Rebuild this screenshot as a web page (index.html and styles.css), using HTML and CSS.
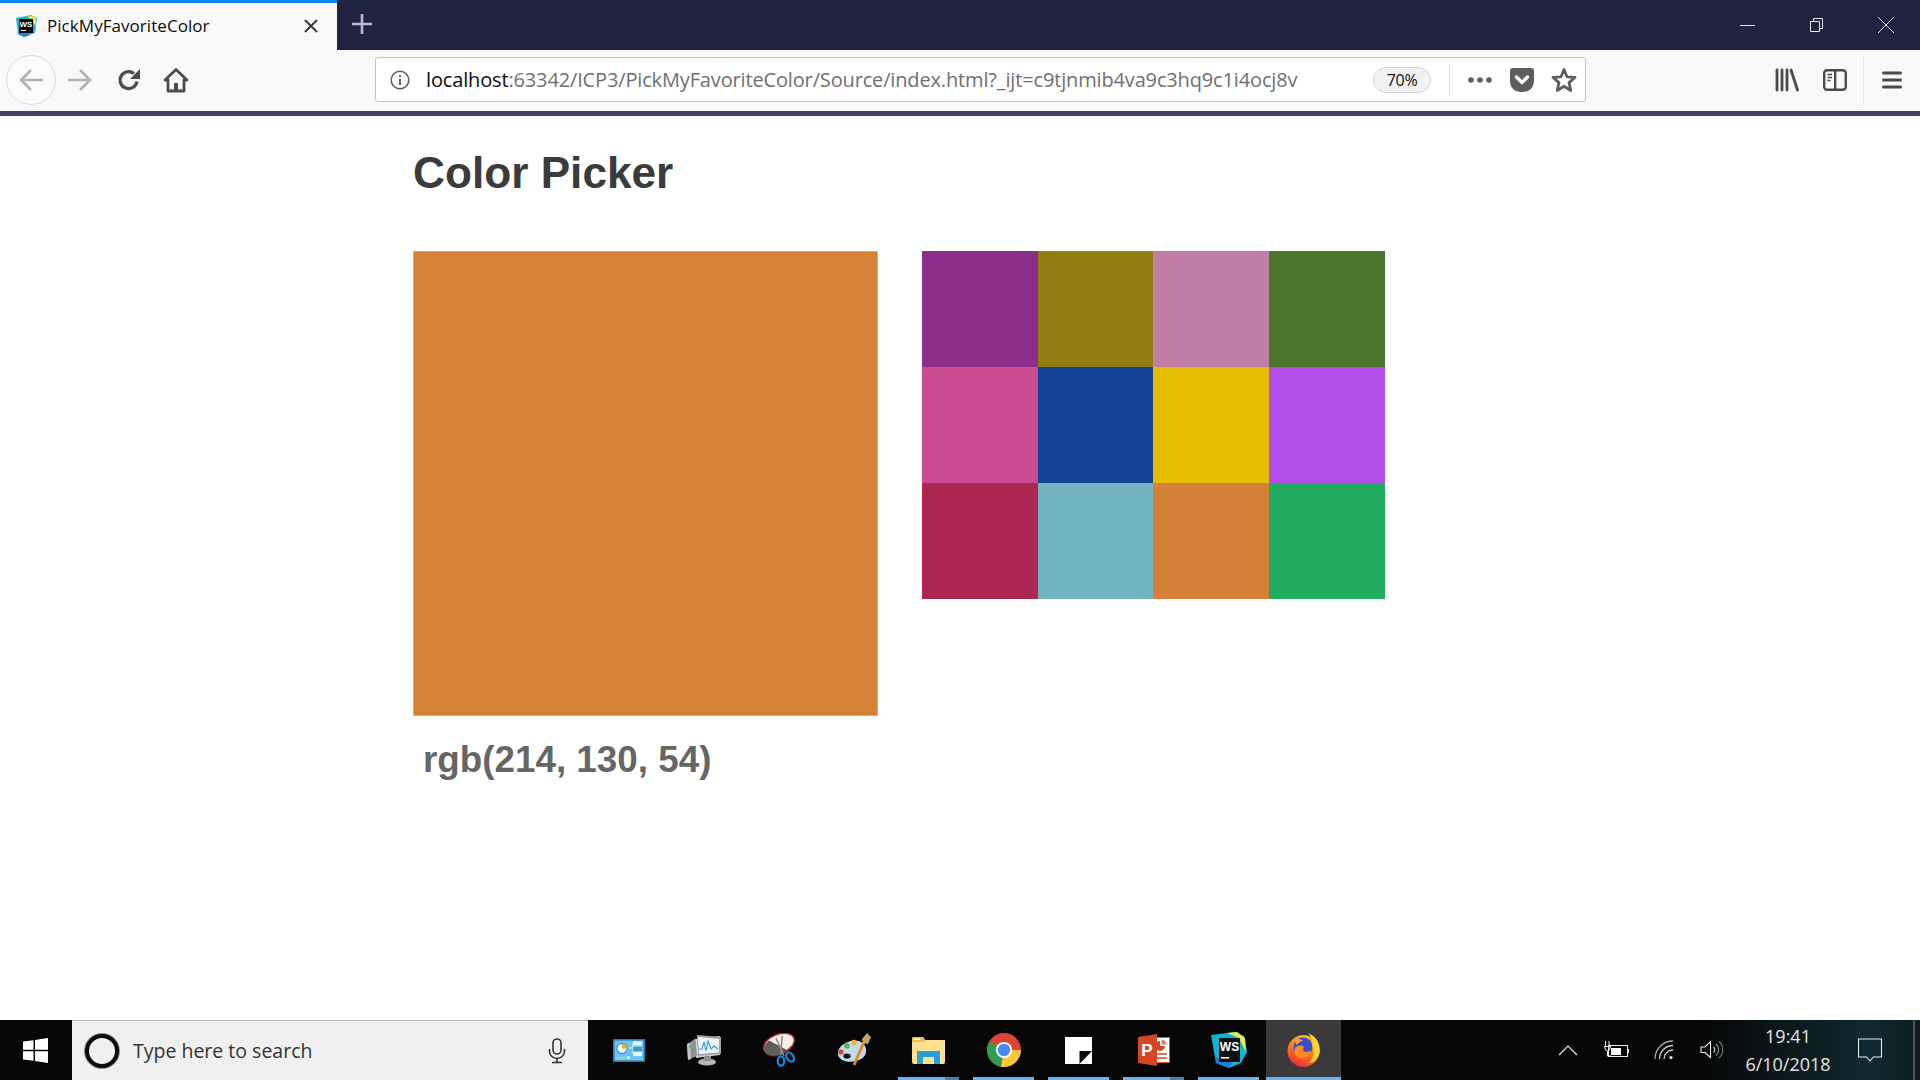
FILE: index.html
```html
<!DOCTYPE html>
<html lang="en">
<head>
<meta charset="utf-8">
<title>PickMyFavoriteColor</title>
<link rel="stylesheet" href="styles.css">
</head>
<body>
<header class="chrome">
  <div class="titlebar">
    <div class="tab">
      <svg class="favicon" viewBox="0 0 22 22"><path d="M1 3 L16 0 L22 3 L20 18 L9 22 L3 19Z" fill="#1fb6d8"/><path d="M12 0 L21 2 L21 11Z" fill="#f3e43a"/><path d="M3 19 L9 22 L15 20 L5 14Z" fill="#1c7fe0"/><rect x="4" y="4" width="14" height="14" fill="#000"/><text x="11" y="12" class="fav-text">WS</text><rect x="6" y="15" width="5" height="1" fill="#fff"/></svg>
      <span class="tab-title">PickMyFavoriteColor</span>
      <svg class="tab-close" viewBox="0 0 14 14"><path d="M1 1 L13 13 M13 1 L1 13" stroke="#3a3a3e" stroke-width="2" fill="none"/></svg>
    </div>
    <svg class="newtab" viewBox="0 0 22 22"><path d="M11 1 V21 M1 11 H21" stroke="#b9bac4" stroke-width="2.6" fill="none"/></svg>
    <div class="winctl">
      <div class="winbtn"><svg width="16" height="16" viewBox="0 0 16 16"><path d="M0 8.5 H15" stroke="#e8e8ee" fill="none"/></svg></div>
      <div class="winbtn"><svg width="16" height="16" viewBox="0 0 16 16"><path d="M1.5 4.5 H10.5 V14.5 H1.5Z M4.5 4.5 V1.5 H13.5 V11.5 H10.5" stroke="#e8e8ee" fill="none"/></svg></div>
      <div class="winbtn"><svg width="18" height="18" viewBox="0 0 18 18"><path d="M1 1 L17 17 M17 1 L1 17" stroke="#e8e8ee" fill="none"/></svg></div>
    </div>
  </div>
  <div class="toolbar">
    <div class="back"><svg width="26" height="24" viewBox="0 0 26 24"><path d="M13 2 L3 12 L13 22 M3 12 H25" stroke="#b3b3b5" stroke-width="2.6" fill="none"/></svg></div>
    <div class="tool"><svg width="26" height="24" viewBox="0 0 26 24"><path d="M13 2 L23 12 L13 22 M23 12 H1" stroke="#b3b3b5" stroke-width="2.6" fill="none"/></svg></div>
    <div class="tool reload"><svg width="24" height="24" viewBox="0 0 24 24"><path d="M20 13.5 A8.5 8.5 0 1 1 17 5.5" stroke="#4a4a4f" stroke-width="3.2" fill="none"/><path d="M23 1 V11 H13Z" fill="#4a4a4f"/></svg></div>
    <div class="tool"><svg width="26" height="26" viewBox="0 0 26 26"><path d="M13 2.5 L24 13 L21 13 V24 H5 V13 H2Z" stroke="#4a4a4f" stroke-width="2.8" stroke-linejoin="round" fill="none"/><rect x="11" y="16" width="4" height="8" fill="#4a4a4f"/></svg></div>
    <div class="urlbar">
      <svg class="info" viewBox="0 0 20 20"><circle cx="10" cy="10" r="8.8" stroke="#5a5a5f" stroke-width="1.5" fill="none"/><rect x="9" y="9" width="2" height="6" fill="#5a5a5f"/><rect x="9" y="5.2" width="2" height="2" fill="#5a5a5f"/></svg>
      <div class="url"><span class="host">localhost</span>:63342/ICP3/PickMyFavoriteColor/Source/index.html?_ijt=c9tjnmib4va9c3hq9c1i4ocj8v</div>
      <div class="zoom-pill">70%</div>
      <div class="vsep"></div>
      <svg class="dots" viewBox="0 0 24 6"><circle cx="3" cy="3" r="2.8" fill="#5c5c61"/><circle cx="12" cy="3" r="2.8" fill="#5c5c61"/><circle cx="21" cy="3" r="2.8" fill="#5c5c61"/></svg>
      <svg class="pocket" viewBox="0 0 24 24"><path d="M0 3 Q0 0 3 0 H21 Q24 0 24 3 V12 Q24 24 12 24 Q0 24 0 12Z" fill="#5c5c61"/><path d="M6.5 9 L12 14.5 L17.5 9" stroke="#fff" stroke-width="3.4" stroke-linecap="round" stroke-linejoin="round" fill="none"/></svg>
      <svg class="star" viewBox="0 0 26 26"><path d="M13 2.5 L16 9.8 L24 10.4 L18 15.6 L19.8 23.5 L13 19.2 L6.2 23.5 L8 15.6 L2 10.4 L10 9.8Z" stroke="#5c5c61" stroke-width="2.8" stroke-linejoin="round" fill="none"/></svg>
    </div>
    <div class="tool-right">
      <svg class="tr-icon" viewBox="0 0 24 24"><path d="M2 2 V22 M7 2 V22 M12 2 V22 M16 2 L22.5 22" stroke="#4a4a4f" stroke-width="2.8" fill="none" stroke-linecap="round"/></svg>
      <svg class="tr-icon" viewBox="0 0 24 24"><rect x="1.2" y="2.2" width="21.6" height="19.6" rx="3" stroke="#4a4a4f" stroke-width="2.4" fill="none"/><rect x="11" y="2" width="2.4" height="20" fill="#4a4a4f"/><path d="M4.5 6.5 H9 M4.5 9.5 H9 M4.5 12.5 H7.5" stroke="#4a4a4f" stroke-width="1.6"/></svg>
      <div class="tr-sep"></div>
      <svg class="tr-menu" viewBox="0 0 20 20"><path d="M1.5 3 H18.5 M1.5 10 H18.5 M1.5 17 H18.5" stroke="#4a4a4f" stroke-width="3" stroke-linecap="round"/></svg>
    </div>
  </div>
  <div class="accent"></div>
</header>

<main class="page">
  <h1 class="heading">Color Picker</h1>
  <div class="picker">
    <div class="target"></div>
    <div class="grid">
      <div class="c1"></div><div class="c2"></div><div class="c3"></div><div class="c4"></div>
      <div class="c5"></div><div class="c6"></div><div class="c7"></div><div class="c8"></div>
      <div class="c9"></div><div class="c10"></div><div class="c11"></div><div class="c12"></div>
    </div>
  </div>
  <p class="readout">rgb(214, 130, 54)</p>
</main>

<footer class="taskbar">
  <div class="start"><svg width="25" height="25" viewBox="0 0 25 25"><path d="M0 3.6 L10.5 2.2 V11.8 H0Z M12 2 L25 0 V11.8 H12Z M0 13.2 H10.5 V22.8 L0 21.4Z M12 13.2 H25 V25 L12 23Z" fill="#fff"/></svg></div>
  <div class="search">
    <div class="ring"></div>
    <span class="search-text">Type here to search</span>
    <svg class="mic" viewBox="0 0 18 26"><rect x="5" y="1" width="8" height="15" rx="4" stroke="#333" stroke-width="1.6" fill="none"/><path d="M1.5 11 V13 A7.5 7.5 0 0 0 16.5 13 V11 M9 20.5 V24 M4 24.5 H14" stroke="#333" stroke-width="1.6" fill="none"/></svg>
  </div>
  <div class="apps">
    <div class="app">
      <svg width="32" height="23" viewBox="0 0 32 23"><rect width="32" height="23" fill="#1f78b8"/><rect x="1.5" y="1.5" width="29" height="20" fill="#6cc4f0"/><circle cx="9" cy="9.5" r="5.5" fill="#2f7fc0"/><circle cx="9" cy="9.5" r="4.6" fill="#e9f6fd"/><path d="M9 9.5 V4.5 A5 5 0 0 1 14 9.5Z" fill="#f2ad2e"/><path d="M16 9 H20 M20 4.5 V14" stroke="#e8f6fd" stroke-width="1"/><rect x="20" y="2.5" width="9" height="4" fill="#e8f6fd"/><rect x="20" y="8" width="9" height="4" fill="#3d9ad6"/><rect x="20" y="13" width="9" height="4" fill="#e8f6fd"/><rect x="3" y="18" width="10" height="1.5" fill="#d8c878"/><rect x="14" y="17.5" width="3" height="2" fill="#fff"/></svg>
    </div>
    <div class="app">
      <svg width="34" height="32" viewBox="0 0 34 32"><path d="M8 5 L33 2 V21 L9 24Z" fill="#cfd2d5"/><path d="M10 1 L34 3 V20 L11 22Z" fill="#9fa3a7"/><path d="M11 3 L32 5 V18.5 L12 20Z" fill="#eaf5fc"/><path d="M12 15 L15 15 L17 8 L19 17 L21 7 L24 15 L27 12 L31 15" stroke="#3f93d8" stroke-width="1.1" fill="none"/><path d="M0 10 L8 5 L10 22 L1 26Z" fill="#8f9295"/><path d="M0 10 L3 9 L4 25 L1 26Z" fill="#c4c7c9"/><rect x="2" y="11" width="2" height="3" fill="#59c24a"/><ellipse cx="20" cy="28" rx="9" ry="3.6" fill="#b4b6b8"/><rect x="17" y="22" width="7" height="5" fill="#8e9092"/></svg>
    </div>
    <div class="app">
      <svg width="34" height="34" viewBox="0 0 34 34"><ellipse cx="17" cy="11" rx="16" ry="9.5" transform="rotate(-22 17 11)" fill="#f4f0ec" stroke="#c22b2f" stroke-width="1.4"/><path d="M1 15 Q3 24 14 23 Q22 22 24 17 L7 8Z" fill="#5f5f60" stroke="#8e2a2a" stroke-width=".8"/><path d="M14 5 L22 23 M20 3 L19 22" stroke="#8b8b8d" stroke-width="1.6" fill="none"/><ellipse cx="19" cy="28" rx="3.2" ry="4.6" stroke="#1a86d0" stroke-width="2.4" fill="none"/><ellipse cx="28" cy="24" rx="3.2" ry="5" transform="rotate(-35 28 24)" stroke="#1a86d0" stroke-width="2.4" fill="none"/></svg>
    </div>
    <div class="app">
      <svg width="35" height="34" viewBox="0 0 35 34"><path d="M12 9 C22 5 31 10 30 19 C29 28 14 31 6 27 C-1 23 1 13 12 9Z" fill="#bfdcee"/><ellipse cx="11" cy="23" rx="3.6" ry="2.6" fill="#0d0d0d"/><circle cx="5" cy="19" r="2.6" fill="#d8443a"/><circle cx="11" cy="13" r="2.8" fill="#5cb54a"/><circle cx="18" cy="9.5" r="2.8" fill="#f0b832"/><path d="M28 9 L18 32" stroke="#e8871e" stroke-width="2.8"/><path d="M26 6 L31 0 L35 4 L32 11 L27 10Z" fill="#c9a26b"/></svg>
    </div>
    <div class="app run split">
      <svg width="33" height="27" viewBox="0 0 33 27"><path d="M0 2 Q0 0 2 0 H11 L13 3 H33 V25 Q33 27 31 27 H2 Q0 27 0 25Z" fill="#ffe190"/><path d="M0 2 Q0 0 2 0 H11 L13 3 V5 H0Z" fill="#eec24e"/><rect x="2" y="1.6" width="6" height="1.4" fill="#fff"/><path d="M5 27 V14 H28 V27 H22 V20 H11 V27Z" fill="#2aa0da"/></svg>
    </div>
    <div class="app run">
      <svg width="34" height="34" viewBox="0 0 36 36"><circle cx="18" cy="18" r="18" fill="#db4437"/><path d="M18 18 L2.4 9 A18 18 0 0 0 14.9 35.7 L23 23Z" fill="#2e9e4f"/><path d="M18 18 H35.8 A18 18 0 0 1 14.9 35.7Z" fill="#fcc934"/><circle cx="18" cy="18" r="8.6" fill="#fff"/><circle cx="18" cy="18" r="6.6" fill="#4a8af4"/></svg>
    </div>
    <div class="app run">
      <svg width="27" height="27" viewBox="0 0 27 27"><rect width="27" height="27" fill="#fff"/><path d="M14.5 14 H27 L14.5 27Z" fill="#0a0a0a"/></svg>
    </div>
    <div class="app run split">
      <svg width="32" height="32" viewBox="0 0 32 32"><rect x="14" y="3" width="18" height="26" fill="#d8573a"/><rect x="15" y="4" width="16" height="24" fill="#fff"/><path d="M22 7 A5 5 0 1 0 27 12 H22Z" fill="#d24726"/><path d="M23.5 5.5 A5 5 0 0 1 28.5 10.5 H23.5Z" fill="#e97a5a"/><path d="M18 20 H29 M18 24 H29" stroke="#d24726" stroke-width="1.6"/><path d="M0 3 L19 0 V32 L0 29Z" fill="#d24726"/><text x="9" y="22" class="ppt-text">P</text></svg>
    </div>
    <div class="app run">
      <svg width="36" height="36" viewBox="0 0 36 36"><path d="M0 3 L24 0 L33 4 L36 20 L30 31 L18 36 L5 31Z" fill="#12b3cc"/><path d="M16 1 L26 0 L34 6 L35 20 L28 6Z" fill="#e6ee4a"/><path d="M4 25 L5 31 L18 36 L22 30Z" fill="#1a7fda"/><rect x="8" y="6" width="21" height="24" fill="#111"/><text x="18.5" y="19" class="ws-text">WS</text><rect x="10" y="25" width="8" height="1.6" fill="#fff"/></svg>
    </div>
    <div class="app run active">
      <svg width="33" height="34" viewBox="0 0 33 34"><defs><linearGradient id="ff" x1="0.7" y1="0" x2="0.3" y2="1"><stop offset="0" stop-color="#ffb52a"/><stop offset=".5" stop-color="#ff7a1e"/><stop offset="1" stop-color="#e9283f"/></linearGradient></defs><circle cx="16.5" cy="18" r="16" fill="url(#ff)"/><circle cx="16" cy="14" r="9.5" fill="#3a4fd0"/><path d="M21 0 C29 3 34 11 32.5 20 C31 26 26 30 22 30 C27 25 28 17 25 12 C26 8 25 4 21 0Z" fill="#ffd52e"/><path d="M8 15 C11 12 15 12 17 14 C15 16 16 19 19 19 C21 19 23 18 24 17 C23 23 18 26 13 25 C9 24 7 20 8 15Z" fill="#ff8b1c"/><path d="M8 7 C11 5 14 6 16 8 C13 8 11 10 10 12 C9 11 8 9 8 7Z" fill="#ffa52a"/></svg>
    </div>
  </div>
  <div class="tray">
    <div class="tray-item"><svg width="20" height="12" viewBox="0 0 20 12"><path d="M1 11 L10 2 L19 11" stroke="#e8e8e8" stroke-width="1.2" fill="none"/></svg></div>
    <div class="tray-item"><svg width="26" height="18" viewBox="0 0 26 18"><rect x="5.5" y="4.5" width="19" height="11" stroke="#eee" fill="none"/><rect x="8" y="7" width="10" height="7" fill="#fff"/><rect x="25" y="8" width="1" height="4" fill="#eee"/><path d="M1 5.5 H8 M2.5 5.5 V0 M6 5.5 V0 M1.5 5.5 Q2 10 4.5 10 Q7 10 7.5 5.5 M4.5 10 V15 H8" stroke="#eee" fill="none"/></svg></div>
    <div class="tray-item"><svg width="20" height="20" viewBox="0 0 20 20"><path d="M1 19 A18 18 0 0 1 19 1" stroke="#aaa" stroke-width="1.3" fill="none"/><path d="M5.5 19 A13.5 13.5 0 0 1 19 5.5" stroke="#ccc" stroke-width="1.3" fill="none"/><path d="M10 19 A9 9 0 0 1 19 10" stroke="#ddd" stroke-width="1.3" fill="none"/><circle cx="17" cy="17.5" r="1.6" fill="#eee"/></svg></div>
    <div class="tray-item"><svg width="24" height="20" viewBox="0 0 24 20"><path d="M1 7 H5 L10.5 1.5 V17.5 L5 12.5 H1Z" stroke="#eee" stroke-width="1.1" fill="none"/><path d="M13.5 7 A3.5 3.5 0 0 1 13.5 12.5" stroke="#ddd" stroke-width="1.1" fill="none"/><path d="M16 4 A7.5 7.5 0 0 1 16 15.5" stroke="#999" stroke-width="1.1" fill="none"/><path d="M19 1.5 A11 11 0 0 1 19 18" stroke="#777" stroke-width="1.1" fill="none"/></svg></div>
    <div class="clock"><span>19:41</span><span>6/10/2018</span></div>
    <div class="notify"><svg width="24" height="24" viewBox="0 0 24 24"><path d="M0.5 1 H23.5 V19 H15.5 L12 23 L8.5 19 H0.5Z" stroke="#eee" stroke-width="1.1" fill="none"/></svg></div>
    <div class="desktop"></div>
  </div>
</footer>
</body>
</html>
```
FILE: styles.css
```css
* { box-sizing: border-box; }
html, body { margin: 0; height: 100%; }
body {
  width: 1920px;
  height: 1080px;
  display: flex;
  flex-direction: column;
  overflow: hidden;
  background: #fff;
  font-family: "Open Sans", "Noto Sans", sans-serif;
}

/* browser chrome */
.titlebar { height: 50px; background: #202340; display: flex; align-items: stretch; }
.tab {
  width: 337px;
  background: #f9f9fa;
  border-top: 3px solid #0a84ff;
  display: flex;
  align-items: center;
  padding: 0 19px 2px 15px;
}
.favicon { width: 22px; height: 22px; flex: none; }
.fav-text { font: bold 8px "Liberation Sans", sans-serif; fill: #fff; text-anchor: middle; }
.tab-title { margin-left: 10px; flex: 1; font-size: 17px; letter-spacing: .05px; color: #0c0c0d; white-space: nowrap; }
.tab-close { width: 14px; height: 14px; }
.newtab { width: 22px; height: 22px; margin: 13px 0 0 14px; }
.winctl { margin-left: auto; display: flex; }
.winbtn { width: 69px; display: flex; align-items: center; justify-content: center; }

.toolbar { height: 61px; background: #f9f9fa; display: flex; align-items: center; padding: 0 0 2px 6px; }
.back {
  width: 50px; height: 50px; border-radius: 50%;
  border: 1px solid #dcdcdd; background: #fbfbfb;
  display: flex; align-items: center; justify-content: center;
}
.tool { width: 48px; display: flex; justify-content: center; }
.reload { padding-left: 1px; }
.urlbar {
  width: 1211px; height: 45px; margin-left: 175px;
  background: #fff;
  border: 1px solid #c4c4c6;
  border-radius: 3px;
  display: flex; align-items: center;
  padding-left: 14px;
}
.info { width: 20px; height: 20px; flex: none; }
.url { margin-left: 16px; width: 947px; font-size: 20px; letter-spacing: -.15px; color: #6f6f72; white-space: nowrap; overflow: hidden; }
.host { color: #0c0c0d; }
.zoom-pill {
  width: 58px; height: 26px;
  border: 1px solid #d4d4d6; border-radius: 13px; background: #f1f1f2;
  font-size: 16px; letter-spacing: -.3px; color: #0c0c0d;
  display: flex; align-items: center; justify-content: center;
}
.vsep { width: 1px; height: 30px; background: #dedee0; margin-left: 18px; }
.dots { width: 24px; height: 6px; margin-left: 18px; }
.pocket { width: 24px; height: 24px; margin-left: 18px; }
.star { width: 26px; height: 26px; margin-left: 17px; }
.tool-right { flex: 1; display: flex; align-items: center; padding-left: 189px; }
.tr-icon { width: 24px; height: 24px; margin-right: 24px; }
.tr-sep { width: 1px; height: 50px; background: #e4e4e6; margin-left: -8px; }
.tr-menu { width: 20px; height: 20px; margin-left: 18px; }
.accent { height: 5px; background: #4b3d63; }

/* page */
.page { flex: 1; padding: 31px 0 0 413px; color: #3b3b3b; font-family: "Liberation Sans", Arial, sans-serif; }
.heading { margin: 0 0 52px; font-size: 44.2px; line-height: 52px; font-weight: bold; color: #3b3b3b; }
.picker { display: flex; align-items: flex-start; gap: 44px; }
.target { width: 465px; height: 465px; background: rgb(214, 130, 54); border: 1px solid #b5b5b5; }
.grid { display: grid; grid-template-columns: 116px 115px 116px 116px; grid-auto-rows: 116px; }
.c1 { background: #8c2e8c; } .c2 { background: #937d10; } .c3 { background: #c07da6; } .c4 { background: #4c762d; }
.c5 { background: #ca4d92; } .c6 { background: #124395; } .c7 { background: #e5bd00; } .c8 { background: #b14ee7; }
.c9 { background: #ad2654; } .c10 { background: #72b4c2; } .c11 { background: #d48036; } .c12 { background: #21ab5e; }
.readout { margin: 21px 0 0 10px; font-size: 36.8px; line-height: 46px; font-weight: bold; color: #666; }

/* taskbar */
.taskbar { height: 60px; display: flex; background: linear-gradient(90deg, #060606 0, #060606 1700px, #0e2a30 1870px, #0c1c20 1920px); }
.start { width: 72px; display: flex; align-items: center; justify-content: center; padding-right: 2px; }
.search {
  width: 516px; background: #f0f0f0; border-top: 1px solid #b8b8b8;
  display: flex; align-items: center; padding: 0 22px 0 13px;
}
.ring { width: 34px; height: 34px; border-radius: 50%; border: 4px solid #0a0a0a; box-shadow: 0 0 0 1px #888; background: #f0f0f0; flex: none; }
.search-text { margin-left: 14px; flex: 1; font-size: 19.5px; color: #333; white-space: nowrap; }
.mic { width: 18px; height: 26px; }
.apps { display: flex; padding-left: 3px; }
.app { width: 75px; position: relative; display: flex; align-items: center; justify-content: center; }
.run::after { content: ""; position: absolute; left: 7px; right: 7px; bottom: 0; height: 3px; background: #6eb1e8; }
.split::before { content: ""; position: absolute; right: 7px; bottom: 0; width: 14px; height: 3px; background: #4a7fae; z-index: 1; }
.active { background: #3a3a3a; }
.active::after { left: 0; right: 0; }
.tray { margin-left: auto; display: flex; align-items: stretch; color: #e6e6e6; }
.tray-item { width: 48px; display: flex; align-items: center; justify-content: center; }
.clock { width: 104px; display: flex; flex-direction: column; align-items: center; justify-content: center; font-size: 18px; line-height: 28px; }
.notify { width: 60px; display: flex; align-items: center; justify-content: center; }
.desktop { width: 20px; position: relative; }
.desktop::after { content: ""; position: absolute; left: 13px; top: 0; bottom: 0; width: 2px; background: #555; }
.ppt-text { font: bold 17px "Liberation Sans", sans-serif; fill: #fff; text-anchor: middle; }
.ws-text { font: bold 12px "Liberation Sans", sans-serif; fill: #fff; text-anchor: middle; }
```
